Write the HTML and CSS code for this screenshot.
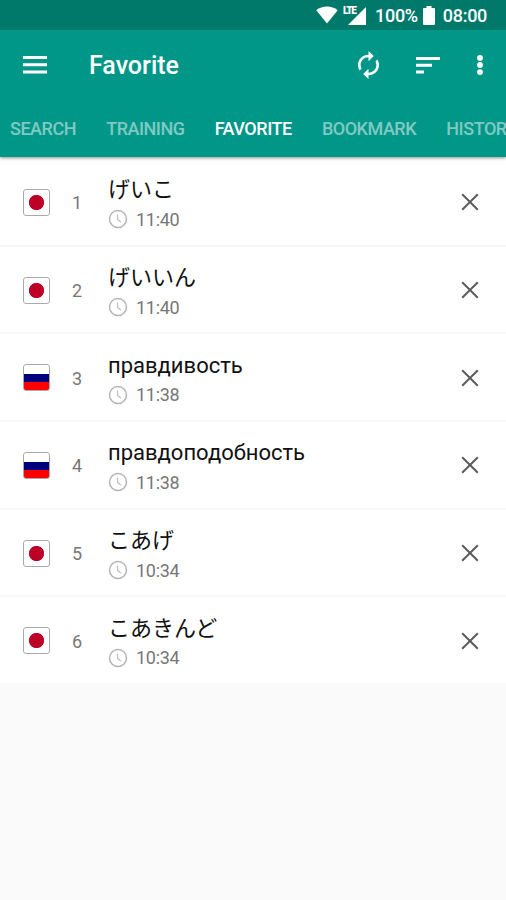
FILE: index.html
```html
<!DOCTYPE html>
<html lang="en">
<head>
    <meta charset="utf-8">
    <title>Favorite</title>
    <link rel="stylesheet" href="styles.css">
</head>
<body>
    <svg class="sprite">
        <symbol id="clock" viewBox="0 0 20 20">
            <circle cx="10" cy="10" r="8.500" fill="none" stroke="#b4b4b4" stroke-width="1.500"/>
            <path d="M9.500 5.500v5l3.500 2.800" fill="none" stroke="#c0c0c0" stroke-width="1.300"/>
        </symbol>
        <symbol id="close" viewBox="0 0 18 18">
            <path d="M1.200 1.200l15.600 15.600M16.800 1.200L1.200 16.800" fill="none" stroke="#5c5c5c" stroke-width="2"/>
        </symbol>
    </svg>

    <header class="header">
        <div class="status">
            <svg class="wifi" width="22" height="18" viewBox="0 0 22 18"><path d="M11 17.500L.3 4.200C3.300 1.800 7 .5 11 .5s7.700 1.300 10.700 3.700z" fill="#fff"/></svg>
            <span class="signal">
                <svg width="18" height="18" viewBox="0 0 18 18"><path d="M18 0v18H0z" fill="#fff"/></svg>
                <span class="lte">LTE</span>
            </span>
            <span class="percent">100%</span>
            <svg class="battery" width="12" height="19" viewBox="0 0 12 19"><path d="M3.500 0h5v2H11q1 0 1 1v15q0 1-1 1H1q-1 0-1-1V3q0-1 1-1h2.500z" fill="#fff"/></svg>
            <span class="clock">08:00</span>
        </div>
        <div class="toolbar">
            <svg class="menu" width="24" height="18" viewBox="0 0 24 18"><path d="M0 0h24v3H0zM0 7.300h24v3H0zM0 14.600h24v3H0z" fill="#fff"/></svg>
            <h1 class="title">Favorite</h1>
            <svg class="sync" width="21" height="28" viewBox="4 1 16 22" preserveAspectRatio="none"><path d="M12 6v3l4-4-4-4v3c-4.420 0-8 3.580-8 8 0 1.570.46 3.030 1.240 4.260L6.700 14.800c-.45-.83-.7-1.790-.7-2.800 0-3.310 2.690-6 6-6zm6.760 1.740L17.300 9.200c.44.84.7 1.790.7 2.800 0 3.310-2.690 6-6 6v-3l-4 4 4 4v-3c4.420 0 8-3.580 8-8 0-1.570-.46-3.030-1.240-4.260z" fill="#fff"/></svg>
            <svg class="sort" width="24" height="17" viewBox="0 0 24 17"><path d="M0 0h24v3H0zM0 6.800h16v3H0zM0 13.500h8v3H0z" fill="#fff"/></svg>
            <svg class="more" width="6" height="20" viewBox="0 0 6 20"><path d="M3 0a2.900 2.900 0 0 1 0 5.800A2.900 2.900 0 0 1 3 0zM3 7.100a2.900 2.900 0 0 1 0 5.800 2.900 2.900 0 0 1 0-5.800zM3 14.200a2.900 2.900 0 0 1 0 5.800 2.900 2.900 0 0 1 0-5.800z" fill="#fff"/></svg>
        </div>
        <nav class="tabs">
            <span>SEARCH</span>
            <span>TRAINING</span>
            <span class="active">FAVORITE</span>
            <span>BOOKMARK</span>
            <span>HISTORY</span>
        </nav>
    </header>

    <ul class="list">
        <li class="row">
            <span class="flag jp"></span>
            <span class="number">1</span>
            <div class="entry">
                <div class="word ja" lang="ja">げいこ</div>
                <div class="time"><svg width="20" height="20"><use href="#clock"/></svg>11:40</div>
            </div>
            <svg class="remove" width="18" height="18"><use href="#close"/></svg>
        </li>
        <li class="row">
            <span class="flag jp"></span>
            <span class="number">2</span>
            <div class="entry">
                <div class="word ja" lang="ja">げいいん</div>
                <div class="time"><svg width="20" height="20"><use href="#clock"/></svg>11:40</div>
            </div>
            <svg class="remove" width="18" height="18"><use href="#close"/></svg>
        </li>
        <li class="row">
            <span class="flag ru"></span>
            <span class="number">3</span>
            <div class="entry">
                <div class="word" lang="ru">правдивость</div>
                <div class="time"><svg width="20" height="20"><use href="#clock"/></svg>11:38</div>
            </div>
            <svg class="remove" width="18" height="18"><use href="#close"/></svg>
        </li>
        <li class="row">
            <span class="flag ru"></span>
            <span class="number">4</span>
            <div class="entry">
                <div class="word" lang="ru">правдоподобность</div>
                <div class="time"><svg width="20" height="20"><use href="#clock"/></svg>11:38</div>
            </div>
            <svg class="remove" width="18" height="18"><use href="#close"/></svg>
        </li>
        <li class="row">
            <span class="flag jp"></span>
            <span class="number">5</span>
            <div class="entry">
                <div class="word ja" lang="ja">こあげ</div>
                <div class="time"><svg width="20" height="20"><use href="#clock"/></svg>10:34</div>
            </div>
            <svg class="remove" width="18" height="18"><use href="#close"/></svg>
        </li>
        <li class="row">
            <span class="flag jp"></span>
            <span class="number">6</span>
            <div class="entry">
                <div class="word ja" lang="ja">こあきんど</div>
                <div class="time"><svg width="20" height="20"><use href="#clock"/></svg>10:34</div>
            </div>
            <svg class="remove" width="18" height="18"><use href="#close"/></svg>
        </li>
    </ul>
</body>
</html>
```
FILE: styles.css
```css
* {
    box-sizing: border-box;
}

body {
    margin: 0;
    height: 900px;
    overflow: hidden;
    background-color: #fafafa;
    font-family: Roboto, "Noto Sans CJK JP", sans-serif;
}

svg {
    display: block;
    flex: none;
}

.sprite {
    display: none;
}

.header {
    position: relative;
    height: 157px;
    background-color: #009688;
    color: #fff;
    box-shadow: 0 1px 3px rgba(0, 0, 0, 0.45);
}

.status {
    display: flex;
    align-items: center;
    height: 30px;
    padding: 1px 18px 0 0;
    justify-content: flex-end;
    background-color: #00796b;
    font-size: 18px;
    font-weight: 500;
    letter-spacing: -0.3px;
}

.wifi {
    margin-top: -2px;
}

.signal {
    position: relative;
    margin: 0 9px 0 10px;
}

.lte {
    position: absolute;
    left: -5px;
    top: -1px;
    padding-right: 1px;
    background-color: #00796b;
    font-size: 10px;
    font-weight: 900;
    line-height: 9px;
    letter-spacing: -1.3px;
}

.battery {
    margin: 0 8px 0 5px;
}

.clock {
    margin-right: 1px;
}

.toolbar {
    display: flex;
    align-items: center;
    height: 70px;
    padding: 0 23px;
}

.title {
    flex: 1;
    margin: 1px 0 0 42px;
    font-size: 25px;
    font-weight: 500;
}

.sort {
    margin: 0 37px;
}

.tabs {
    display: flex;
    align-items: center;
    gap: 30.2px;
    height: 57px;
    padding-left: 10px;
    overflow: hidden;
    white-space: nowrap;
    font-size: 18px;
    font-weight: 500;
    letter-spacing: -0.48px;
    color: rgba(255, 255, 255, 0.5);
}

.active {
    color: #fff;
}

.list {
    list-style: none;
    margin: 0;
    padding: 2px 0 0;
    background-color: #fff;
}

.row {
    display: flex;
    align-items: center;
    height: 87.7px;
    padding: 0 27px 0 23px;
    border-bottom: 2px solid #f6f6f6;
}

.row:last-child {
    border-bottom-color: #fafafa;
}

.flag {
    width: 27px;
    height: 27px;
    margin-top: 1px;
    border: 1px solid #aaa;
    border-radius: 3px;
}

.jp {
    background: radial-gradient(circle, #be0027 7.2px, #fff 8px);
}

.ru {
    background: linear-gradient(#fff 35%, #00007f 35%, #00007f 67%, #f00 67%);
}

.number {
    width: 26px;
    margin: 2px 18px 0 14px;
    text-align: center;
    font-size: 18px;
    letter-spacing: -0.2px;
    color: #777;
}

.entry {
    flex: 1;
    padding-top: 5px;
}

.word {
    height: 30px;
    line-height: 32px;
    font-size: 22px;
    color: #111;
}

.ja {
    line-height: 31px;
}

.time {
    display: flex;
    align-items: center;
    gap: 8px;
    height: 30px;
    font-size: 18px;
    letter-spacing: -0.3px;
    color: #777;
}

.remove {
    margin-top: 1px;
}
```
